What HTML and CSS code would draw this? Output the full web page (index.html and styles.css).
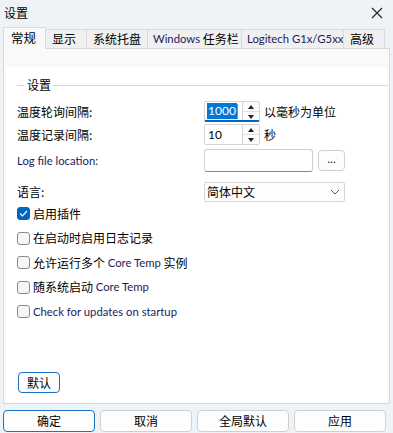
FILE: index.html
```html
<!DOCTYPE html>
<html lang="zh-CN">
<head>
<meta charset="utf-8">
<title>设置</title>
<link rel="stylesheet" href="styles.css">
</head>
<body>
<div class="window">
  <div class="titlebar">
    <span class="title">设置</span>
    <svg class="close" width="12" height="12" viewBox="0 0 12 12"><path d="M1 1L11 11M11 1L1 11" stroke="#222" stroke-width="1.1" fill="none"/></svg>
  </div>
  <div class="tabs">
    <div class="tab active">常规</div>
    <div class="tab w41">显示</div>
    <div class="tab w61">系统托盘</div>
    <div class="tab w94"><span class="en">Windows</span> 任务栏</div>
    <div class="tab w102"><span class="en">Logitech G1x/G5xx</span></div>
    <div class="tab w41">高级</div>
  </div>
  <div class="page">
    <div class="content">
      <div class="group">
        <span class="line short"></span><span class="legend">设置</span><span class="line"></span>
      </div>
      <div class="row r1">
        <span class="label">温度轮询间隔:</span>
        <div class="spin focused">
          <span class="val"><span class="sel">1000</span><span class="caret"></span></span>
          <span class="arrows"><span class="up"></span><span class="down"></span></span>
        </div>
        <span class="unit">以毫秒为单位</span>
      </div>
      <div class="row r2">
        <span class="label">温度记录间隔:</span>
        <div class="spin">
          <span class="val"><span class="en num">10</span></span>
          <span class="arrows"><span class="up"></span><span class="down"></span></span>
        </div>
        <span class="unit">秒</span>
      </div>
      <div class="row r3">
        <span class="label en">Log file location:</span>
        <div class="textbox"></div>
        <div class="browse en">...</div>
      </div>
      <div class="row r4">
        <span class="label">语言:</span>
        <div class="combo">
          <span>简体中文</span>
          <svg width="10" height="6" viewBox="0 0 10 6"><path d="M1 1L5 5L9 1" stroke="#555" stroke-width="1" fill="none"/></svg>
        </div>
      </div>
      <div class="checks">
        <div class="check"><span class="box on"><svg width="9" height="7" viewBox="0 0 9 7"><path d="M1 3.5L3.5 6L8 1" stroke="#fff" stroke-width="1.2" fill="none"/></svg></span>启用插件</div>
        <div class="check"><span class="box"></span>在启动时启用日志记录</div>
        <div class="check"><span class="box"></span>允许运行多个 <span class="en">Core Temp</span> 实例</div>
        <div class="check"><span class="box"></span>随系统启动 <span class="en">Core Temp</span></div>
        <div class="check"><span class="box"></span><span class="en">Check for updates on startup</span></div>
      </div>
      <div class="spacer"></div>
      <div class="defbtn">默认</div>
    </div>
  </div>
  <div class="footer">
    <div class="btn primary">确定</div>
    <div class="btn">取消</div>
    <div class="btn">全局默认</div>
    <div class="btn">应用</div>
  </div>
</div>
</body>
</html>
```
FILE: styles.css
```css
html, body {
  margin: 0;
  padding: 0;
}
body {
  width: 393px;
  height: 433px;
  overflow: hidden;
  background: #eef3f8;
  font-family: "Noto Sans CJK SC", "Noto Sans", sans-serif;
  font-size: 12px;
  color: #000;
}
.en {
  font-family: Lato, "Noto Sans", sans-serif;
  font-size: 11.3px;
  color: #1c1c5e;
}
.window {
  display: flex;
  flex-direction: column;
  height: 433px;
}
.titlebar {
  height: 27px;
  display: flex;
  align-items: center;
  justify-content: space-between;
  padding: 0 10px 0 4px;
  box-sizing: border-box;
}
.title {
  font-size: 12px;
  line-height: 1;
  margin-top: -2px;
}
.close {
  margin-top: -2px;
}
.tabs {
  display: flex;
  align-items: flex-end;
  height: 21px;
  padding-left: 3px;
  position: relative;
  z-index: 1;
}
.tab {
  flex: none;
  height: 19px;
  box-sizing: border-box;
  border: 1px solid #d9d9d9;
  border-bottom: none;
  border-left: none;
  background: #f0f0f0;
  display: flex;
  align-items: center;
  padding-left: 6px;
  line-height: 1;
  white-space: pre;
  overflow: hidden;
  font-size: 12px;
}
.tab.active {
  width: 43px;
  background: #f9f9f9;
  border-left: 1px solid #d9d9d9;
  padding-left: 7px;
  margin-bottom: -1px;
  height: 22px;
  font-size: 12.5px;
}
.w41 { width: 41px; }
.w61 { width: 61px; }
.w94 { width: 94px; padding-left: 5px; }
.w102 { width: 102px; padding-left: 5px; }
.page {
  margin: 0 3px 0 3px;
  height: 356px;
  box-sizing: border-box;
  border: 1px solid #d9d9d9;
  background: #f9f9f9;
  padding: 18px 2px 1px 2px;
  display: flex;
}
.content {
  flex: 1;
  background: #fff;
  display: flex;
  flex-direction: column;
  padding: 11px 0 9px 11px;
  position: relative;
}
.group {
  display: flex;
  align-items: center;
  height: 14px;
  margin-bottom: 9px;
}
.line {
  flex: 1;
  height: 1px;
  background: #d5d5d5;
}
.line.short {
  flex: 0 0 7px;
}
.legend {
  padding: 0 2px 0 3px;
  line-height: 1;
}
.row {
  display: flex;
  align-items: center;
}
.label {
  width: 187px;
  line-height: 1;
}
.r1 { height: 21px; }
.r2 { height: 21px; margin-top: 2px; }
.r3 { height: 23px; margin-top: 4px; }
.r4 { height: 20px; margin-top: 10px; }
.spin {
  width: 56px;
  height: 21px;
  box-sizing: border-box;
  border: 1px solid #d4d4d4;
  border-radius: 2px;
  display: flex;
  background: #fff;
}
.spin.focused {
  border-bottom: 2px solid #0067c0;
}
.val {
  flex: 1;
  display: flex;
  align-items: center;
  padding-left: 2px;
}
.sel {
  background: #0078d7;
  color: #fff;
  font-family: Lato, "Noto Sans", sans-serif;
  font-size: 12px;
  line-height: 16px;
  padding: 0 1px;
}
.caret {
  width: 1px;
  height: 15px;
  background: #e07a1f;
}
.num {
  padding-left: 1px;
  color: #000;
  font-size: 12px;
}
.arrows {
  width: 16px;
  display: flex;
  flex-direction: column;
  border-left: 1px solid #d4d4d4;
}
.up, .down {
  flex: 1;
  position: relative;
  border-bottom: 1px solid #e0e0e0;
  background: #fbfbfb;
}
.down { border-bottom: none; }
.up::after, .down::after {
  content: "";
  position: absolute;
  left: 5px;
  top: 3px;
  border-left: 3px solid transparent;
  border-right: 3px solid transparent;
}
.up::after { border-bottom: 4px solid #222; }
.down::after { border-top: 4px solid #222; top: 3px; }
.unit {
  margin-left: 4px;
  line-height: 1;
}
.textbox {
  width: 109px;
  height: 23px;
  box-sizing: border-box;
  border: 1px solid #d0d0d0;
  border-bottom-color: #8a8a8a;
  border-radius: 3px;
  background: #fff;
}
.browse {
  margin-left: 5px;
  width: 27px;
  height: 21px;
  box-sizing: border-box;
  border: 1px solid #d0d0d0;
  border-radius: 4px;
  display: flex;
  align-items: center;
  justify-content: center;
  font-size: 12px;
  line-height: 1;
  padding-bottom: 4px;
  background: #fdfdfd;
}
.combo {
  width: 141px;
  height: 20px;
  box-sizing: border-box;
  border: 1px solid #d4d4d4;
  border-radius: 2px;
  display: flex;
  align-items: center;
  justify-content: space-between;
  padding: 0 4px 0 2px;
  line-height: 1;
  background: #fdfdfd;
}
.checks {
  display: flex;
  flex-direction: column;
  gap: 11.5px;
  margin-top: 5px;
}
.check {
  display: flex;
  align-items: center;
  height: 13px;
  line-height: 1;
  white-space: pre;
}
.box {
  width: 13px;
  height: 13px;
  box-sizing: border-box;
  border: 1px solid #8a8a8a;
  border-radius: 3px;
  background: #f6f6f6;
  margin-right: 3px;
  flex: none;
  display: flex;
  align-items: center;
  justify-content: center;
}
.box.on {
  background: #0067c0;
  border-color: #0067c0;
}
.spacer {
  flex: 1;
}
.defbtn {
  align-self: flex-start;
  margin-left: 1px;
  width: 42px;
  height: 21px;
  box-sizing: border-box;
  border: 1px solid #1a73c9;
  border-radius: 4px;
  display: flex;
  align-items: center;
  justify-content: center;
  line-height: 1;
  background: #fdfdfd;
}
.footer {
  display: flex;
  gap: 5px;
  padding: 6px 0 0 3px;
}
.btn {
  width: 92px;
  height: 22px;
  box-sizing: border-box;
  border: 1px solid #d0d0d0;
  border-radius: 4px;
  background: #fdfdfd;
  display: flex;
  align-items: center;
  justify-content: center;
  line-height: 1;
}
.btn.primary {
  border-color: #1a73c9;
}
```
